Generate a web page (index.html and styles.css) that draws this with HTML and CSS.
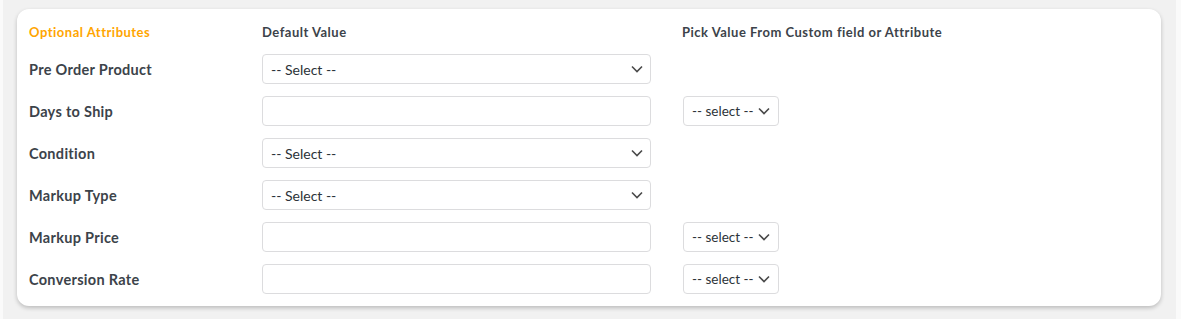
FILE: index.html
```html
<!DOCTYPE html>
<html lang="en">
<head>
  <meta charset="UTF-8" />
  <meta name="viewport" content="width=device-width, initial-scale=1" />
  <title>Optional Attributes</title>
  <link rel="stylesheet" href="styles.css">
</head>
<body>
  <div class="wrap">
    <div class="card">
      <div class="grid head">
        <div class="title">Optional Attributes</div>
        <div>Default Value</div>
        <div class="pick">Pick Value From Custom field or Attribute</div>
      </div>

      <div class="grid row">
        <div class="label">Pre Order Product</div>
        <div class="field select">-- Select --
          <svg class="chev" width="12" height="8" viewBox="0 0 12 8"><path d="M1 1.5l5 5 5-5" fill="none" stroke="#4a4a4a" stroke-width="1.6"/></svg>
        </div>
        <div></div>
      </div>

      <div class="grid row">
        <div class="label">Days to Ship</div>
        <div class="field"></div>
        <div class="pick">
          <div class="field select small">-- select --
            <svg class="chev" width="12" height="8" viewBox="0 0 12 8"><path d="M1 1.5l5 5 5-5" fill="none" stroke="#4a4a4a" stroke-width="1.6"/></svg>
          </div>
        </div>
      </div>

      <div class="grid row">
        <div class="label">Condition</div>
        <div class="field select">-- Select --
          <svg class="chev" width="12" height="8" viewBox="0 0 12 8"><path d="M1 1.5l5 5 5-5" fill="none" stroke="#4a4a4a" stroke-width="1.6"/></svg>
        </div>
        <div></div>
      </div>

      <div class="grid row">
        <div class="label">Markup Type</div>
        <div class="field select">-- Select --
          <svg class="chev" width="12" height="8" viewBox="0 0 12 8"><path d="M1 1.5l5 5 5-5" fill="none" stroke="#4a4a4a" stroke-width="1.6"/></svg>
        </div>
        <div></div>
      </div>

      <div class="grid row">
        <div class="label">Markup Price</div>
        <div class="field"></div>
        <div class="pick">
          <div class="field select small">-- select --
            <svg class="chev" width="12" height="8" viewBox="0 0 12 8"><path d="M1 1.5l5 5 5-5" fill="none" stroke="#4a4a4a" stroke-width="1.6"/></svg>
          </div>
        </div>
      </div>

      <div class="grid row">
        <div class="label">Conversion Rate</div>
        <div class="field"></div>
        <div class="pick">
          <div class="field select small">-- select --
            <svg class="chev" width="12" height="8" viewBox="0 0 12 8"><path d="M1 1.5l5 5 5-5" fill="none" stroke="#4a4a4a" stroke-width="1.6"/></svg>
          </div>
        </div>
      </div>
    </div>
  </div>
</body>
</html>
```

FILE: styles.css
```css
body {
  margin: 0;
  padding: 0;
  background-color: #fafafa;
  font-family: 'Lato', sans-serif;
  color: #3c434a;
}

.wrap {
  margin-left: 3px;
  width: 1173px;
  height: 319px;
  padding: 9px 15px 0 14px;
  background-color: #f1f1f1;
  box-sizing: border-box;
}

.card {
  background-color: #fff;
  border-radius: 12px;
  box-shadow: 0 2px 4px rgba(0, 0, 0, 0.22);
  padding: 11px 12px 6px 12px;
  height: 297px;
  box-sizing: border-box;
}

.grid {
  display: grid;
  grid-template-columns: 233px 389px 1fr;
  align-items: center;
}

.head {
  height: 24px;
  margin-bottom: 4px;
  font-size: 13px;
  letter-spacing: 0.5px;
  font-weight: bold;
}

.head .pick {
  padding-left: 31px;
}

.title {
  color: #ffa500;
}

.pick {
  padding-left: 32px;
}

.row {
  height: 42px;
}

.label {
  font-size: 14.5px;
  letter-spacing: 0.3px;
  font-weight: bold;
}

.field {
  height: 30px;
  border: 1px solid #dcdcde;
  border-radius: 4px;
  box-sizing: border-box;
  background-color: #fff;
}

.select {
  display: flex;
  align-items: center;
  justify-content: space-between;
  padding: 0 7px 0 8px;
  font-size: 14px;
  color: #2c3338;
}

.small {
  width: 96px;
  font-size: 13.5px;
  padding-right: 8px;
}
```
